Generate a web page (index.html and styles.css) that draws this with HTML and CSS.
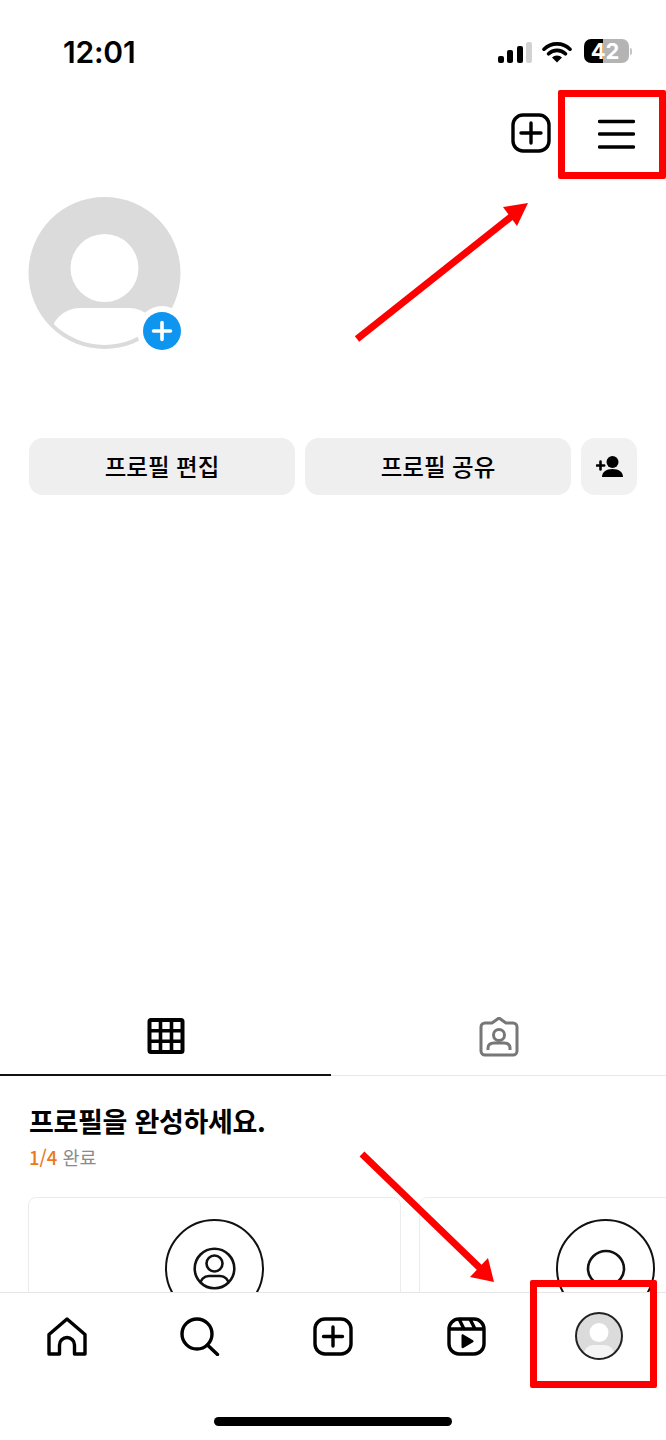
FILE: index.html
```html
<!DOCTYPE html>
<html lang="ko">
<head>
<meta charset="utf-8">
<title>프로필</title>
<link rel="stylesheet" href="styles.css">
</head>
<body>
<div class="phone">
  <main class="content">
    <header class="status">
      <span class="time">12:01</span>
      <div class="indicators">
        <div class="signal"><i class="bar b1"></i><i class="bar b2"></i><i class="bar b3"></i><i class="bar b4"></i></div>
        <svg class="wifi" width="30" height="22" viewBox="0 0 30 22">
          <path d="M2 8.2a18.5 18.5 0 0 1 26 0M6.6 12.8a12 12 0 0 1 16.8 0" fill="none" stroke="#000" stroke-width="3.6" stroke-linecap="round"/>
          <path d="M15 21.5l-5-5a7 7 0 0 1 10 0z" fill="#000"/>
        </svg>
        <div class="battery">42</div>
        <i class="nub"></i>
      </div>
    </header>

    <div class="toolbar">
      <svg class="new" width="40" height="40" viewBox="0 0 40 40">
        <rect x="2" y="2" width="36" height="36" rx="10" fill="none" stroke="#000" stroke-width="3.4"/>
        <path d="M20 10v20M10 20h20" stroke="#000" stroke-width="3.4" stroke-linecap="round"/>
      </svg>
      <svg class="menu" width="37" height="30" viewBox="0 0 37 30">
        <path d="M1.5 2.5h34M1.5 15h34M1.5 28h34" stroke="#000" stroke-width="3.4" stroke-linecap="round"/>
      </svg>
    </div>

    <div class="avatar">
      <svg width="153" height="152" viewBox="0 0 153 152">
        <defs><clipPath id="inner"><circle cx="76.5" cy="76" r="72"/></clipPath></defs>
        <circle cx="76.5" cy="76" r="76" fill="#dbdbdb"/>
        <circle cx="76.5" cy="71" r="34" fill="#fff"/>
        <rect x="22" y="111" width="109" height="60" rx="30" fill="#fff" clip-path="url(#inner)"/>
      </svg>
      <span class="badge">
        <svg width="38" height="38" viewBox="0 0 38 38">
          <circle cx="19" cy="19" r="19" fill="#0d95f0"/>
          <path d="M19 10.500v17M10.500 19h17" stroke="#fff" stroke-width="3.600" stroke-linecap="round"/>
        </svg>
      </span>
    </div>

    <div class="actions">
      <div class="btn">프로필 편집</div>
      <div class="btn">프로필 공유</div>
      <div class="btn btn-icon">
        <svg width="27" height="21" viewBox="0 0 27 21">
          <circle cx="16.500" cy="6" r="6" fill="#000"/>
          <path d="M6 21c0-5 4-8 10.500-8S27 16 27 21z" fill="#000"/>
          <path d="M4.500 5.500v8M.8 9.500h7.400" stroke="#000" stroke-width="2.600" stroke-linecap="round"/>
        </svg>
      </div>
    </div>

    <nav class="tabs">
      <div class="tab tab-active">
        <svg width="38" height="36" viewBox="0 0 38 36">
          <rect x="2.500" y="2" width="33" height="32" rx="1.500" fill="none" stroke="#000" stroke-width="4"/>
          <path d="M13.500 2v32M24.500 2v32M2 12.700h34M2 23.300h34" stroke="#000" stroke-width="3.600"/>
        </svg>
      </div>
      <div class="tab">
        <svg width="40" height="40" viewBox="0 0 40 40">
          <path d="M6 6h7l7-5 7 5h7a4 4 0 0 1 4 4v24a4 4 0 0 1-4 4H6a4 4 0 0 1-4-4V10a4 4 0 0 1 4-4z" fill="none" stroke="#777" stroke-width="3" stroke-linejoin="round"/>
          <circle cx="20" cy="18" r="5.500" fill="none" stroke="#777" stroke-width="3"/>
          <path d="M9 33v-2c0-4 3-5 6-5h10c3 0 6 1 6 5v2" fill="none" stroke="#777" stroke-width="3"/>
        </svg>
      </div>
    </nav>

    <section class="complete">
      <h2 class="title">프로필을 완성하세요.</h2>
      <p class="progress"><span class="count">1/4</span> 완료</p>
    </section>

    <div class="cards">
      <article class="card">
        <div class="ring">
          <svg width="43" height="43" viewBox="0 0 43 43">
            <defs><clipPath id="face"><circle cx="21.500" cy="21.500" r="19.500"/></clipPath></defs>
            <circle cx="21.500" cy="21.500" r="19.800" fill="none" stroke="#111" stroke-width="2.600"/>
            <circle cx="21.500" cy="16.500" r="8" fill="none" stroke="#111" stroke-width="2.600"/>
            <rect x="7" y="29" width="29" height="20" rx="9" fill="none" stroke="#111" stroke-width="2.600" clip-path="url(#face)"/>
          </svg>
        </div>
      </article>
      <article class="card">
        <div class="ring">
          <svg width="40" height="40" viewBox="0 0 40 40">
            <path d="M13 36c-6-3-11-9-11-16a18 18 0 0 1 36 0c0 7-5 13-11 16" fill="none" stroke="#111" stroke-width="2.600"/>
          </svg>
        </div>
      </article>
    </div>
  </main>

  <footer class="bottom">
    <div class="nav-row">
      <div class="nav-item">
        <svg width="40" height="39" viewBox="0 0 40 39">
          <path d="M2 37V17.500L20 2l18 15.500V37H27.500V28a7.500 7.500 0 0 0-15 0v9z" fill="none" stroke="#000" stroke-width="3.400" stroke-linejoin="round"/>
        </svg>
      </div>
      <div class="nav-item">
        <svg width="40" height="39" viewBox="0 0 40 39">
          <circle cx="17" cy="17" r="15" fill="none" stroke="#000" stroke-width="3.400"/>
          <path d="M27.500 28l10 9.500" stroke="#000" stroke-width="3.400" stroke-linecap="round"/>
        </svg>
      </div>
      <div class="nav-item">
        <svg width="40" height="39" viewBox="0 0 40 39">
          <rect x="2" y="2" width="36" height="35" rx="10" fill="none" stroke="#000" stroke-width="3.400"/>
          <path d="M20 10v19M10.500 19.500h19" stroke="#000" stroke-width="3.400" stroke-linecap="round"/>
        </svg>
      </div>
      <div class="nav-item">
        <svg width="39" height="39" viewBox="0 0 39 39">
          <rect x="2" y="2" width="35" height="35" rx="10" fill="none" stroke="#000" stroke-width="3.400"/>
          <path d="M2 12h35M12 2l5 10M23 2l5 10" fill="none" stroke="#000" stroke-width="3.400"/>
          <path d="M14.500 18.500c0-1 1-1.500 1.800-1L26 23.200c.8.500.8 1.600 0 2.100l-9.700 5.700c-.8.500-1.800 0-1.800-1z" fill="#000"/>
        </svg>
      </div>
      <div class="nav-item nav-me">
        <svg width="48" height="48" viewBox="0 0 48 48">
          <defs><clipPath id="me"><circle cx="24" cy="24" r="22"/></clipPath></defs>
          <circle cx="24" cy="24" r="23" fill="#dbdbdb" stroke="#222" stroke-width="2"/>
          <circle cx="24" cy="20.500" r="9.500" fill="#fff"/>
          <rect x="9" y="33" width="30" height="18" rx="9" fill="#f4f4f4" clip-path="url(#me)"/>
        </svg>
      </div>
    </div>
    <div class="home-bar"></div>
  </footer>

  <div class="mark mark-menu"></div>
  <div class="mark mark-me"></div>
  <svg class="arrows" width="666" height="1440" viewBox="0 0 666 1440">
    <path d="M357 339L512 216" stroke="#fe0000" stroke-width="7"/>
    <path d="M528 203L503 207L517 226z" fill="#fe0000"/>
    <path d="M362 1154L482 1270" stroke="#fe0000" stroke-width="7"/>
    <path d="M494 1282L470 1277L488 1258z" fill="#fe0000"/>
  </svg>
</div>
</body>
</html>
```

FILE: styles.css
```css
* {
  box-sizing: border-box;
}

html,
body {
  margin: 0;
  padding: 0;
  background: #fff;
}

body {
  font-family: "Inter", "Noto Sans CJK KR", sans-serif;
  color: #000;
}

.phone {
  position: relative;
  width: 666px;
  height: 1440px;
  overflow: hidden;
  display: flex;
  flex-direction: column;
}

.content {
  flex: 1 1 auto;
  min-height: 0;
  overflow: hidden;
}

/* status bar */
.status {
  height: 90px;
  display: flex;
  justify-content: space-between;
  padding: 36px 34px 0 63px;
}

.time {
  font-size: 30px;
  font-weight: 600;
  line-height: 33px;
  letter-spacing: -0.2px;
}

.indicators {
  display: flex;
  align-items: flex-start;
  padding-top: 5px;
  margin-top: -1px;
}

.signal {
  display: flex;
  align-items: flex-end;
  gap: 3.5px;
  height: 22px;
  margin-top: 1px;
}

.bar {
  display: block;
  width: 6px;
  border-radius: 2px;
  background: #000;
}

.b1 { height: 7px; }
.b2 { height: 13px; }
.b3 { height: 17px; }
.b4 { height: 21px; background: #d2d2d2; }

.wifi {
  margin: 1px 0 0 10px;
}

.battery {
  width: 45px;
  height: 24px;
  margin-left: 12px;
  margin-top: -1px;
  border-radius: 7px;
  background: linear-gradient(90deg, #000 0 19px, #b4b4b4 19px);
  color: #fff;
  font-size: 22px;
  font-weight: 700;
  line-height: 24px;
  text-align: center;
  padding-right: 3px;
}

.nub {
  display: block;
  width: 2px;
  height: 7px;
  margin: 8px 0 0 1px;
  border-radius: 0 2px 2px 0;
  background: #c4c4c4;
}

/* top actions */
.toolbar {
  height: 107px;
  display: flex;
  justify-content: flex-end;
  align-items: flex-start;
  gap: 47px;
  padding: 23px 31px 0 0;
}

.menu {
  margin-top: 6px;
}

/* avatar */
.avatar {
  position: relative;
  width: 153px;
  height: 152px;
  margin-left: 28px;
}

.avatar > svg {
  display: block;
}

.badge {
  position: absolute;
  left: 109px;
  top: 109px;
  width: 50px;
  height: 50px;
  padding: 6px;
  border-radius: 50%;
  background: #fff;
}

.badge svg {
  display: block;
}

/* buttons */
.actions {
  display: flex;
  gap: 10px;
  margin-top: 89px;
  padding: 0 29px;
}

.btn {
  flex: 0 0 266px;
  height: 57px;
  display: flex;
  align-items: center;
  justify-content: center;
  padding-bottom: 2px;
  border-radius: 14px;
  background: #efefef;
  font-family: "Noto Sans CJK KR", sans-serif;
  font-size: 23.5px;
  font-weight: 500;
}

.btn-icon {
  flex-basis: 56px;
  padding-bottom: 0;
  background: #f1f1f1;
}

/* tabs */
.tabs {
  display: grid;
  grid-template-columns: 331px 335px;
  margin-top: 505px;
  height: 76px;
}

.tab {
  display: flex;
  justify-content: center;
  padding-top: 17px;
  border-bottom: 1px solid #e8e8e8;
}

.tab-active {
  padding-top: 18px;
  border-bottom: 2px solid #111;
}

/* profile completion */
.complete {
  padding: 26px 29px 0;
}

.title {
  margin: 0;
  font-family: "Noto Sans CJK KR", sans-serif;
  font-size: 27px;
  font-weight: 700;
  line-height: 38px;
  letter-spacing: -0.3px;
}

.progress {
  margin: 4px 0 0;
  font-family: "Noto Sans CJK KR", sans-serif;
  font-size: 18.5px;
  line-height: 26px;
  color: #8a8a8a;
}

.count {
  color: #e8791c;
  font-weight: 500;
}

/* cards */
.cards {
  display: flex;
  gap: 18px;
  margin-top: 27px;
  padding-left: 28px;
}

.card {
  flex: 0 0 373px;
  height: 240px;
  padding-top: 21px;
  border: 1px solid #ececec;
  border-radius: 8px;
}

.ring {
  width: 99px;
  height: 99px;
  margin: 0 auto;
  display: flex;
  align-items: center;
  justify-content: center;
  border: 2.8px solid #111;
  border-radius: 50%;
}

/* bottom navigation */
.bottom {
  flex: 0 0 148px;
  border-top: 1px solid #e6e6e6;
  background: #fff;
}

.nav-row {
  display: grid;
  grid-template-columns: repeat(5, 1fr);
  height: 124px;
  padding-top: 24px;
}

.nav-item {
  display: flex;
  justify-content: center;
}

.nav-me {
  margin-top: -5px;
}

.home-bar {
  width: 238px;
  height: 9px;
  margin: 0 auto;
  border-radius: 5px;
  background: #000;
}

/* annotations drawn over the screenshot */
.mark {
  position: absolute;
  border: 7px solid #fe0000;
  border-radius: 2px;
}

.mark-menu {
  left: 558px;
  top: 90px;
  width: 108px;
  height: 89px;
}

.mark-me {
  left: 530px;
  top: 1280px;
  width: 127px;
  height: 108px;
}

.arrows {
  position: absolute;
  left: 0;
  top: 0;
  pointer-events: none;
}
```
